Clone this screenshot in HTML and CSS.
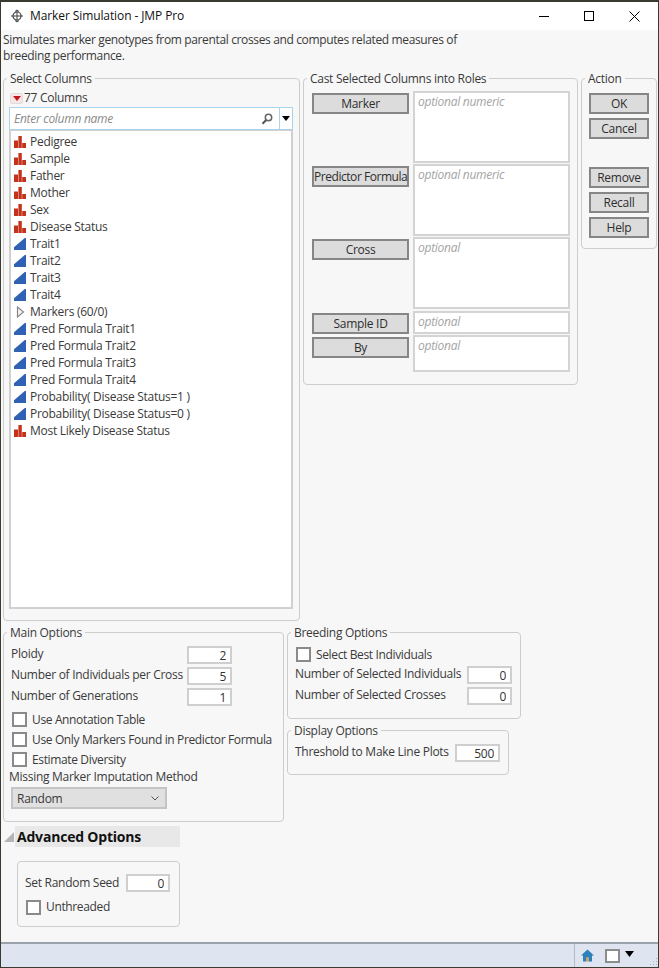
FILE: index.html
```html
<!DOCTYPE html>
<html lang="en">
<head>
<meta charset="utf-8">
<title>Marker Simulation - JMP Pro</title>
<link rel="stylesheet" href="styles.css">
</head>
<body>
<svg class="defs" width="0" height="0" aria-hidden="true">
  <symbol id="nom" viewBox="0 0 12 12"><path d="M0 4.500h4V12H0zM4.400 0h3.400v12H4.400zM8.200 7H12v5H8.200z" fill="#c5321c"/></symbol>
  <symbol id="con" viewBox="0 0 12 12"><path d="M0 12V9.200L10.800 0H12v12z" fill="#2f62b4"/></symbol>
</svg>
<div class="window">
  <header class="titlebar">
    <svg class="appicon" width="14" height="14" viewBox="0 0 14 14"><circle cx="7" cy="7" r="4" fill="none" stroke="#444" stroke-width="1.200"/><path d="M1 7h12M7 1v12" stroke="#444" stroke-width="1"/><path d="M5 2.500 7 1l2 1.500M5 11.500 7 13l2-1.500" fill="none" stroke="#444"/></svg>
    <span class="title">Marker Simulation - JMP Pro</span>
    <div class="winctl">
      <svg width="11" height="11" viewBox="0 0 11 11"><path d="M0 5.500h10" stroke="#000"/></svg>
      <svg width="11" height="11" viewBox="0 0 11 11"><rect x=".5" y=".5" width="9" height="9" fill="none" stroke="#000"/></svg>
      <svg width="11" height="11" viewBox="0 0 11 11"><path d="M.5.500l10 10M10.500.500l-10 10" stroke="#000" fill="none"/></svg>
    </div>
  </header>

  <main class="dialog">
    <p class="desc">Simulates marker genotypes from parental crosses and computes related measures of<br>breeding performance.</p>

    <div class="toprow">
      <fieldset class="panel select-cols">
        <legend>Select Columns</legend>
        <div class="colcount"><span class="redmenu"><svg width="8" height="5" viewBox="0 0 8 5"><path d="M0 0h8L4 5z" fill="#c3161c"/></svg></span>77 Columns</div>
        <div class="search">
          <input class="search-input" type="text" placeholder="Enter column name">
          <svg class="lens" width="12" height="12" viewBox="0 0 12 12"><circle cx="7.500" cy="4.500" r="3.200" fill="none" stroke="#666" stroke-width="1.500"/><path d="M5.200 7 1.500 10.800" stroke="#555" stroke-width="2"/></svg>
          <span class="search-drop"><svg width="8" height="5" viewBox="0 0 8 5"><path d="M0 0h8L4 5z" fill="#000"/></svg></span>
        </div>
        <ul class="collist">
          <li><svg class="ci"><use href="#nom"/></svg>Pedigree</li>
          <li><svg class="ci"><use href="#nom"/></svg>Sample</li>
          <li><svg class="ci"><use href="#nom"/></svg>Father</li>
          <li><svg class="ci"><use href="#nom"/></svg>Mother</li>
          <li><svg class="ci"><use href="#nom"/></svg>Sex</li>
          <li><svg class="ci"><use href="#nom"/></svg>Disease Status</li>
          <li><svg class="ci"><use href="#con"/></svg>Trait1</li>
          <li><svg class="ci"><use href="#con"/></svg>Trait2</li>
          <li><svg class="ci"><use href="#con"/></svg>Trait3</li>
          <li><svg class="ci"><use href="#con"/></svg>Trait4</li>
          <li><svg class="ci" viewBox="0 0 12 12"><path d="M3.500 1v10l6-5z" fill="#f4f4f4" stroke="#888" stroke-width="1.200"/></svg>Markers (60/0)</li>
          <li><svg class="ci"><use href="#con"/></svg>Pred Formula Trait1</li>
          <li><svg class="ci"><use href="#con"/></svg>Pred Formula Trait2</li>
          <li><svg class="ci"><use href="#con"/></svg>Pred Formula Trait3</li>
          <li><svg class="ci"><use href="#con"/></svg>Pred Formula Trait4</li>
          <li><svg class="ci"><use href="#con"/></svg>Probability( Disease Status=1 )</li>
          <li><svg class="ci"><use href="#con"/></svg>Probability( Disease Status=0 )</li>
          <li><svg class="ci"><use href="#nom"/></svg>Most Likely Disease Status</li>
        </ul>
      </fieldset>

      <fieldset class="panel roles">
        <legend>Cast Selected Columns into Roles</legend>
        <div class="role h-a"><button class="btn rolebtn">Marker</button><div class="rolebox">optional numeric</div></div>
        <div class="role h-b"><button class="btn rolebtn tight">Predictor Formula</button><div class="rolebox">optional numeric</div></div>
        <div class="role h-a"><button class="btn rolebtn">Cross</button><div class="rolebox">optional</div></div>
        <div class="role h-c"><button class="btn rolebtn">Sample ID</button><div class="rolebox">optional</div></div>
        <div class="role h-d"><button class="btn rolebtn">By</button><div class="rolebox">optional</div></div>
      </fieldset>

      <fieldset class="panel action">
        <legend>Action</legend>
        <button class="btn actbtn">OK</button>
        <button class="btn actbtn">Cancel</button>
        <button class="btn actbtn gap-top">Remove</button>
        <button class="btn actbtn">Recall</button>
        <button class="btn actbtn">Help</button>
      </fieldset>
    </div>

    <div class="bottomrow">
      <fieldset class="panel main-opts">
        <legend>Main Options</legend>
        <div class="fieldrow"><span>Ploidy</span><input class="num" type="text" value="2"></div>
        <div class="fieldrow"><span>Number of Individuals per Cross</span><input class="num" type="text" value="5"></div>
        <div class="fieldrow"><span>Number of Generations</span><input class="num" type="text" value="1"></div>
        <div class="checks">
          <label class="check"><input type="checkbox">Use Annotation Table</label>
          <label class="check"><input type="checkbox">Use Only Markers Found in Predictor Formula</label>
          <label class="check"><input type="checkbox">Estimate Diversity</label>
        </div>
        <div class="missing">Missing Marker Imputation Method</div>
        <div class="combo"><span>Random</span><svg width="8" height="5" viewBox="0 0 8 5"><path d="M.5.500 4 4 7.500.500" fill="none" stroke="#555"/></svg></div>
      </fieldset>

      <div class="rightopts">
        <fieldset class="panel breeding">
          <legend>Breeding Options</legend>
          <label class="check"><input type="checkbox">Select Best Individuals</label>
          <div class="fieldrow"><span>Number of Selected Individuals</span><input class="num" type="text" value="0"></div>
          <div class="fieldrow"><span>Number of Selected Crosses</span><input class="num" type="text" value="0"></div>
        </fieldset>
        <fieldset class="panel display">
          <legend>Display Options</legend>
          <div class="fieldrow"><span>Threshold to Make Line Plots</span><input class="num" type="text" value="500"></div>
        </fieldset>
      </div>
    </div>

    <div class="adv-head">
      <svg class="adv-tri" width="10" height="10" viewBox="0 0 10 10"><path d="M0 10 10 0v10z" fill="#b5b5b5"/></svg>
      <h2 class="adv-title">Advanced Options</h2>
    </div>
    <div class="adv-panel">
      <div class="fieldrow"><span>Set Random Seed</span><input class="num seed" type="text" value="0"></div>
      <label class="check"><input type="checkbox">Unthreaded</label>
    </div>
  </main>

  <footer class="statusbar">
    <div class="status-tools">
      <svg width="13" height="13" viewBox="0 0 13 13"><path d="M6.500.500 0 6.500h2v6h3.500V8.500h2v4H11v-6h2z" fill="#2f7fb8"/><path d="M5.500 12.500V8.500h2v4z" fill="#e4a33a"/></svg>
      <span class="status-box"></span>
      <svg class="status-tri" width="9" height="6" viewBox="0 0 9 6"><path d="M0 0h9L4.500 6z" fill="#000"/></svg>
    </div>
    <svg class="grip" width="10" height="10" viewBox="0 0 10 10"><path d="M8 1h1v1H8zM5 4h1v1H5zM8 4h1v1H8zM2 7h1v1H2zM5 7h1v1H5zM8 7h1v1H8z" fill="#aab0ba"/></svg>
  </footer>
</div>
</body>
</html>
```
FILE: styles.css
```css
* { box-sizing: border-box; }
html, body { margin: 0; height: 100%; }
body {
  width: 659px; height: 968px; overflow: hidden;
  background: #3a3a30;
  padding: 2px 1px 1px;
  font: 12px/16px "Open Sans", "Noto Sans", sans-serif;
  letter-spacing: -0.28px;
  color: #3a3a3a;
}
.defs { position: absolute; }
.window { display: flex; flex-direction: column; width: 657px; height: 965px; background: #f7f7f7; }

.titlebar { display: flex; align-items: center; height: 28px; background: #fff; padding-left: 9px; color: #111; flex: none; }
.appicon { margin-right: 6px; }
.title { letter-spacing: -0.1px; }
.winctl { margin-left: auto; display: flex; gap: 34px; padding-right: 18px; }

.dialog { flex: 1; padding: 0 0 0 2px; min-height: 0; }
.desc { margin: 2px 0 5px; letter-spacing: -0.36px; }

.panel { margin: 0; padding: 0; min-width: 0; border: 1px solid #cdcdcd; border-radius: 4px; }
.panel legend { margin-left: -4px; padding: 2px 3px 0; }

.toprow { display: flex; align-items: flex-start; gap: 3px; }
.select-cols { width: 297px; padding: 2px 6px 11px 5px; }
.select-cols legend { margin-left: -2px; }
.roles { width: 275px; padding: 4px 7px 11px 8px; }
.roles legend { margin-left: -5px; }
.action { width: 76px; padding: 6px 7px 10px 7px; display: flex; flex-direction: column; gap: 4px; }

.colcount { display: flex; align-items: center; height: 18px; }
.redmenu { display: flex; align-items: center; justify-content: center; width: 13px; height: 11px; background: #fbe4e4; border: 1px solid #ddd; border-radius: 2px; margin: 0 1px 0 1px; }
.search { position: relative; display: flex; height: 23px; border: 1px solid #a9d4ec; background: #fff; }
.search-input { flex: 1; min-width: 0; border: 0; outline: 0; padding: 0 4px; background: transparent; font: italic 12px/16px "Open Sans", "Noto Sans", sans-serif; letter-spacing: -0.28px; color: #333; }
.search-input::placeholder { color: #8a8a8a; opacity: 1; }
.lens { align-self: center; margin-right: 6px; }
.search-drop { display: flex; align-items: center; justify-content: center; width: 13px; border-left: 1px solid #a9d4ec; }
.collist { list-style: none; margin: 0; padding: 2px 0 0 3px; height: 479px; background: #fff; border: 2px solid #d0d0d0; border-top-width: 1px; }
.collist li { display: flex; align-items: center; height: 17px; }
.ci { width: 12px; height: 12px; margin-right: 4px; flex: none; }

.btn { font: inherit; letter-spacing: inherit; color: #2e2e2e; background: #dcdcdc; border: 2px solid #868686; padding: 0; height: 21px; line-height: 16px; white-space: nowrap; }
.role { display: flex; gap: 4px; margin-bottom: 1px; }
.h-a { height: 72px; }
.h-b { height: 72px; }
.h-c { height: 23px; margin-top: 2px; }
.h-d { height: 37px; }
.rolebtn { width: 97px; margin-top: 2px; flex: none; }
.h-a .rolebtn, .h-b .rolebtn { padding-top: 1px; }
.tight { letter-spacing: -0.45px; }
.rolebox { flex: 1; border: 2px solid #d4d4d4; background: #fff; color: #a4a4a4; font-style: italic; padding: 1px 3px; }
.actbtn { width: 60px; flex: none; }
.gap-top { margin-top: 24px; }

.bottomrow { display: flex; align-items: flex-start; gap: 3px; margin-top: 2px; }
.main-opts { width: 281px; padding: 5px 51px 12px 7px; }
.fieldrow { display: flex; align-items: center; justify-content: space-between; height: 18px; margin-bottom: 3px; }
.fieldrow span { padding-bottom: 2px; }
.num { width: 45px; height: 18px; flex: none; border: 2px solid #cfcfcf; background: #fff; text-align: right; padding: 0 4px; font: inherit; letter-spacing: inherit; color: #333; outline: 0; }
.check { display: flex; align-items: center; height: 20px; padding-top: 2px; white-space: nowrap; letter-spacing: -0.36px; }
.check input { appearance: none; width: 15px; height: 15px; margin: 0 5px 2px 0; background: #fff; border: 2px solid #8a8a8a; flex: none; }
.main-opts .check { margin-left: 1px; }
.missing { margin: 0 -40px 0 -2px; white-space: nowrap; }
.combo { display: flex; align-items: center; justify-content: space-between; width: 156px; height: 22px; margin-top: 2px; padding: 1px 6px 0 4px; background: #e0e0e0; border: 2px solid #c4c4c4; }

.rightopts { display: flex; flex-direction: column; gap: 2px; }
.breeding { width: 234px; padding: 3px 8px 10px 7px; }
.breeding .check { margin-left: 1px; margin-bottom: 2px; }
.display { width: 222px; padding: 5px 8px 9px 7px; }

.adv-head { display: flex; align-items: center; height: 21px; margin-top: 4px; }
.adv-tri { margin: 0 1px 0 1px; flex: none; }
.adv-title { margin: 0; width: 165px; height: 21px; padding-left: 2px; background: #e8e8e8; color: #111; font-size: 14px; line-height: 21px; font-weight: 700; letter-spacing: -0.2px; }
.adv-panel { width: 163px; height: 66px; margin: 14px 0 0 14px; padding: 12px 9px 0 7px; border: 1px solid #cdcdcd; border-radius: 4px; }
.adv-panel .fieldrow { margin-bottom: 5px; }
.adv-panel .fieldrow span { padding-bottom: 0; }
.seed { width: 44px; }
.adv-panel .check { margin-left: 1px; padding-top: 0; }
.adv-panel .check input { margin-bottom: 0; }

.statusbar { position: relative; flex: none; display: flex; justify-content: flex-end; height: 25px; background: #dfe5f0; border-top: 2px solid #9aa3ad; }
.status-tools { display: flex; align-items: center; width: 84px; gap: 11px; padding-left: 6px; border-left: 1px solid #b4bcc6; }
.status-box { width: 15px; height: 14px; background: #fff; border: 2px solid #8d8d8d; margin-right: -6px; }
.status-tri { margin-bottom: 4px; }
.grip { position: absolute; right: 0; bottom: 0; }
```
